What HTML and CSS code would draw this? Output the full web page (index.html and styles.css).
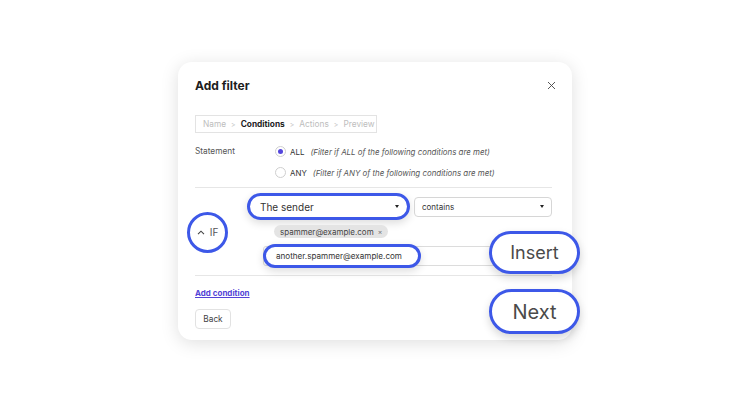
FILE: index.html
```html
<!DOCTYPE html>
<html lang="en">
  <head>
    <meta charset="UTF-8" />
    <meta name="viewport" content="width=device-width, initial-scale=1.0" />
    <title>Add filter</title>
    <link rel="stylesheet" href="styles.css">
  </head>
  <body>
    <main class="page">
      <section class="dialog">
        <header class="dialog-head">
          <h2>Add filter</h2>
          <button class="close" aria-label="Close">
            <svg width="9" height="9" viewBox="0 0 9 9">
              <path d="M1 1 L8 8 M8 1 L1 8" stroke="#444" stroke-width="0.9" fill="none" />
            </svg>
          </button>
        </header>

        <nav class="steps">
          <span>Name</span><span class="sep">&gt;</span>
          <span class="current">Conditions</span><span class="sep">&gt;</span>
          <span>Actions</span><span class="sep">&gt;</span>
          <span>Preview</span>
        </nav>

        <div class="statement">
          <span class="label">Statement</span>
          <div class="options">
            <label class="opt">
              <span class="radio checked"></span>
              <span class="key">ALL</span>
              <i>(Filter if ALL of the following conditions are met)</i>
            </label>
            <label class="opt">
              <span class="radio"></span>
              <span class="key">ANY</span>
              <i>(Filter if ANY of the following conditions are met)</i>
            </label>
          </div>
        </div>

        <div class="condition">
          <div class="if-col">
            <span class="if-badge hl">
              <svg width="8" height="5" viewBox="0 0 8 5">
                <path d="M1 4.2 L4 1.2 L7 4.2" stroke="#444" stroke-width="1.1" fill="none" />
              </svg>
              IF
            </span>
          </div>
          <div class="rule">
            <div class="selects">
              <div class="select big hl">The sender <span class="caret"></span></div>
              <div class="select">contains <span class="caret"></span></div>
            </div>
            <div class="chips">
              <span class="chip">spammer@example.com <span class="x">&times;</span></span>
            </div>
            <div class="entry">
              <div class="entry-box">
                <span class="entry-hl hl">another.spammer@example.com</span>
              </div>
            </div>
          </div>
        </div>

        <div class="foot">
          <a href="#" class="add">Add condition</a>
          <button class="back">Back</button>
        </div>

        <!-- zoomed callouts -->
        <button class="bubble insert">Insert</button>
        <button class="bubble next">Next</button>
      </section>
    </main>
  </body>
</html>
```

FILE: styles.css
```css
body {
  margin: 0;
  background: #fff;
  font-family: Inter, "Noto Sans", sans-serif;
  color: #333;
}

.page {
  box-sizing: border-box;
  width: 750px;
  height: 400px;
  padding-top: 2px;
  display: flex;
  align-items: center;
  justify-content: center;
}

.dialog {
  position: relative;
  box-sizing: border-box;
  width: 394px;
  height: 278px;
  padding: 0 20px 0 17px;
  background: #fff;
  border-radius: 14px;
  box-shadow: 0 3px 18px rgba(0, 0, 0, 0.13);
  display: flex;
  flex-direction: column;
}

.hl {
  border: 3px solid #3d58e8;
  background: #fff;
  box-shadow: 0 3px 8px rgba(0, 0, 0, 0.14);
}

/* header */
.dialog-head {
  display: flex;
  align-items: center;
  justify-content: space-between;
  padding-top: 15px;
  height: 16px;
}

.dialog-head h2 {
  margin: 0;
  font-size: 12px;
  font-weight: 700;
  color: #1d1d1d;
}

.close {
  border: none;
  background: none;
  padding: 0;
  margin-right: -4px;
  display: flex;
}

/* breadcrumb */
.steps {
  margin-top: 22px;
  box-sizing: border-box;
  width: 182px;
  height: 18px;
  padding: 0 7px;
  border: 1px solid #e3e3e3;
  display: flex;
  align-items: center;
  gap: 5px;
  font-size: 8.3px;
  color: #bdbdbd;
}

.steps .sep {
  font-size: 7px;
}

.steps .current {
  color: #1d1d1d;
  font-weight: 700;
}

/* statement */
.statement {
  margin-top: 8px;
  display: flex;
  padding-bottom: 4px;
  border-bottom: 1px solid #e6e6e6;
}

.statement .label {
  width: 80px;
  height: 21px;
  line-height: 21px;
  font-size: 8.3px;
  color: #555;
}

.options {
  display: flex;
  flex-direction: column;
}

.opt {
  height: 21px;
  display: flex;
  align-items: center;
  font-size: 7.9px;
}

.radio {
  box-sizing: border-box;
  width: 11px;
  height: 11px;
  border: 1px solid #cfcfcf;
  border-radius: 50%;
  margin-right: 4px;
  display: flex;
  align-items: center;
  justify-content: center;
}

.radio.checked::after {
  content: "";
  width: 5px;
  height: 5px;
  border-radius: 50%;
  background: #5446dc;
}

.opt .key {
  color: #333;
  margin-right: 6px;
}

.opt i {
  color: #555;
}

/* condition */
.condition {
  display: flex;
  padding: 5px 0 7px;
  border-bottom: 1px solid #e6e6e6;
}

.if-col {
  width: 52px;
  display: flex;
  align-items: center;
}

.if-badge {
  box-sizing: border-box;
  width: 41px;
  height: 41px;
  margin-left: -8px;
  margin-top: 3px;
  border-radius: 50%;
  display: flex;
  align-items: center;
  justify-content: center;
  gap: 5px;
  font-size: 10px;
  color: #555;
  box-shadow: none;
}

.rule {
  flex: 1;
  display: flex;
  flex-direction: column;
}

.selects {
  display: flex;
  align-items: center;
  gap: 4px;
}

.select {
  box-sizing: border-box;
  height: 20px;
  width: 138px;
  padding: 0 7px;
  border: 1px solid #d6d6d6;
  border-radius: 4px;
  display: flex;
  align-items: center;
  justify-content: space-between;
  font-size: 8px;
  color: #333;
}

.select.big {
  width: 163px;
  height: 27px;
  padding: 0 8px 0 10px;
  border-radius: 14px;
  border-color: #3d58e8;
  border-width: 3px;
  font-size: 10px;
}

.caret {
  width: 0;
  height: 0;
  border-left: 2.5px solid transparent;
  border-right: 2.5px solid transparent;
  border-top: 3px solid #222;
}

.chips {
  margin-top: 5px;
  padding-left: 27px;
  height: 13px;
  display: flex;
}

.chip {
  height: 13px;
  padding: 0 6px;
  border-radius: 7px;
  background: #e4e4e4;
  display: flex;
  align-items: center;
  gap: 4px;
  font-size: 8px;
  color: #444;
}

.chip .x {
  font-size: 7px;
  color: #777;
}

.entry {
  margin-top: 6px;
  padding-left: 16px;
  height: 24px;
  display: flex;
  align-items: center;
}

.entry-box {
  flex: 1;
  box-sizing: border-box;
  height: 20px;
  border: 1px solid #dcdcdc;
  border-radius: 3px;
  display: flex;
  align-items: center;
}

.entry-hl {
  box-sizing: border-box;
  width: 158px;
  height: 24px;
  margin-left: -1px;
  padding-left: 10px;
  border-radius: 12px;
  display: flex;
  align-items: center;
  font-size: 8.1px;
  color: #333;
}

/* footer */
.foot {
  display: flex;
  flex-direction: column;
  align-items: flex-start;
}

.add {
  margin-top: 11px;
  line-height: 12px;
  font-size: 8px;
  font-weight: 700;
  color: #5343d6;
}

.back {
  margin-top: 10px;
  box-sizing: border-box;
  height: 20px;
  width: 36px;
  padding: 0;
  border: 1px solid #e2e2e2;
  border-radius: 4px;
  background: #fff;
  font-family: inherit;
  font-size: 8.3px;
  color: #444;
}

/* callouts over the dialog */
.bubble {
  position: absolute;
  left: 311px;
  width: 91px;
  box-sizing: border-box;
  border: 3px solid #3d58e8;
  border-radius: 24px;
  background: #fff;
  box-shadow: 0 4px 9px rgba(0, 0, 0, 0.16);
  font-family: inherit;
  color: #4a4a4a;
  padding: 0;
}

.insert {
  top: 169px;
  height: 43px;
  font-size: 18px;
}

.next {
  top: 227px;
  height: 45px;
  font-size: 20px;
}
```
